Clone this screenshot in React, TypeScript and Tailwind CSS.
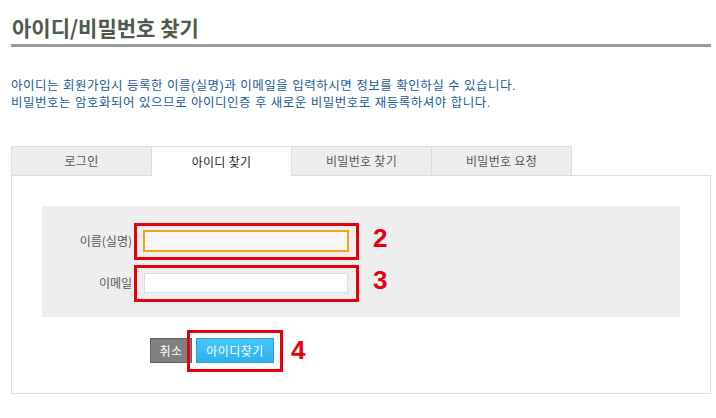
import React from 'react';

const tabs = ['로그인', '아이디 찾기', '비밀번호 찾기', '비밀번호 요청'];

const App: React.FC = () => {
  const active = 1;

  return (
    <div className="w-[716px] h-[418px] bg-white pl-[11px] font-['Noto_Sans_CJK_KR',sans-serif] overflow-hidden">
      <div className="w-[700px]">
        {/* Title */}
        <h1 className="mt-[13px] pl-px h-[28px] leading-[28px] text-[21px] font-bold text-[#4a5a4b]">
          아이디/비밀번호 찾기
        </h1>
        <div className="mt-[3px] h-[3px] bg-[#999999]" />

        {/* Description */}
        <div className="mt-[31px] h-[34px] text-[12.5px] tracking-[0.5px] leading-[17px] text-[#1b5c95] font-['Liberation_Sans','Noto_Sans_CJK_KR',sans-serif]">
          <p>아이디는 회원가입시 등록한 이름(실명)과 이메일을 입력하시면 정보를 확인하실 수 있습니다.</p>
          <p>비밀번호는 암호화되어 있으므로 아이디인증 후 새로운 비밀번호로 재등록하셔야 합니다.</p>
        </div>

        {/* Tabs */}
        <div className="mt-[34px] flex relative z-10">
          {tabs.map((t, i) => (
            <div
              key={t}
              className={
                i === active
                  ? 'w-[141px] h-[30px] -mb-px border border-b-0 border-[#dddddd] -ml-px bg-white text-[12px] tracking-[0.3px] text-[#222222] flex items-center justify-center'
                  : 'w-[141px] h-[29px] border border-b-0 border-[#dddddd] first:ml-0 -ml-px bg-[#eeeeee] text-[12px] tracking-[0.3px] text-[#555555] flex items-center justify-center'
              }
            >
              {t}
            </div>
          ))}
        </div>

        {/* Content box */}
        <div className="relative border border-[#dddddd] px-[30px] pt-[30px] pb-[30px]">
          <div className="bg-[#eeeeee] pt-[25px] pb-[24px] flex flex-col gap-[22px]">
            <div className="flex items-center h-[20px]">
              <label className="w-[90px] text-right text-[12px] text-[#555555]">이름(실명)</label>
              <input className="ml-[12px] w-[204px] h-[20px] bg-[#f7f7f7] border border-[#dddddd] outline-2 outline-solid outline-[#f9a11b] -outline-offset-1" />
            </div>
            <div className="flex items-center h-[20px]">
              <label className="w-[90px] text-right text-[12px] text-[#555555]">이메일</label>
              <input className="ml-[12px] w-[204px] h-[20px] bg-white border border-[#dddddd] outline-none" />
            </div>
          </div>

          <div className="mt-[21px] pl-[108px] flex gap-[4px]">
            <button className="w-[42px] h-[25px] bg-[#808080] border border-[#606060] text-white text-[12px] leading-none tracking-[0.5px]">
              취소
            </button>
            <button className="w-[78px] h-[25px] bg-gradient-to-b from-[#48c6f6] to-[#2db1ec] border border-[#2a9fd8] text-white text-[12px] leading-none tracking-[0.5px]">
              아이디찾기
            </button>
          </div>

          {/* Annotations */}
          <div className="absolute left-[122px] top-[47px] w-[225px] h-[37px] border-[3px] border-[#e5000e]" />
          <div className="absolute left-[122px] top-[89px] w-[225px] h-[37px] border-[3px] border-[#e5000e]" />
          <div className="absolute left-[175px] top-[154px] w-[96px] h-[42px] border-[3px] border-[#e5000e]" />
          <span className="absolute left-[361px] top-[49px] text-[26px] leading-none font-bold text-[#e5000e] font-['Liberation_Sans',sans-serif]">2</span>
          <span className="absolute left-[361px] top-[91px] text-[26px] leading-none font-bold text-[#e5000e] font-['Liberation_Sans',sans-serif]">3</span>
          <span className="absolute left-[279px] top-[161px] text-[26px] leading-none font-bold text-[#e5000e] font-['Liberation_Sans',sans-serif]">4</span>
        </div>
      </div>
    </div>
  );
};

export default App;
